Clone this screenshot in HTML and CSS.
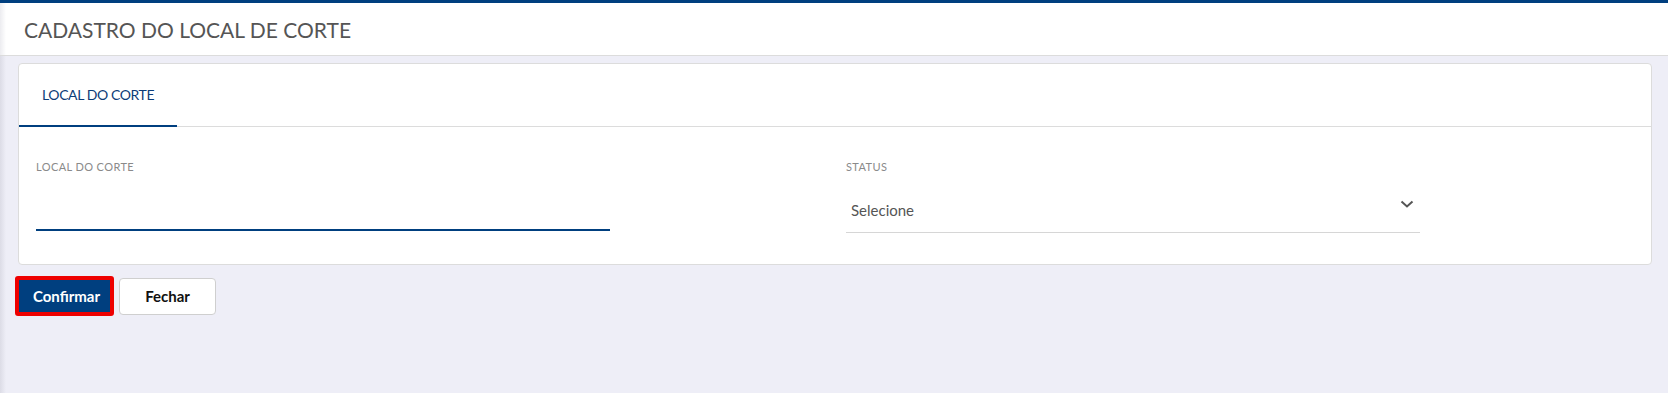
FILE: index.html
```html
<!DOCTYPE html>
<html lang="pt-BR">
<head>
<meta charset="utf-8">
<title>Cadastro do Local de Corte</title>
<link rel="stylesheet" href="styles.css">
</head>
<body>
<header class="page-header">
  <h1 class="page-title">CADASTRO DO LOCAL DE CORTE</h1>
</header>
<main class="page-main">
  <section class="card">
    <nav class="tab-bar">
      <div class="tab tab-active">LOCAL DO CORTE</div>
    </nav>
    <div class="card-body">
      <div class="field">
        <label class="field-label">LOCAL DO CORTE</label>
        <div class="text-input"></div>
      </div>
      <div class="field">
        <label class="field-label">STATUS</label>
        <div class="select">
          <span class="select-text">Selecione</span>
          <svg class="chevron" width="14" height="8" viewBox="0 0 14 8"><polyline points="1.5,1.5 7,6.5 12.5,1.5" fill="none" stroke="#555" stroke-width="2"/></svg>
        </div>
      </div>
    </div>
  </section>
  <div class="actions">
    <button class="btn btn-primary">Confirmar</button>
    <button class="btn btn-default">Fechar</button>
  </div>
</main>
</body>
</html>
```
FILE: styles.css
```css
html, body {
  margin: 0;
  padding: 0;
  height: 100%;
}
body {
  font-family: Lato, "Open Sans", sans-serif;
  background: linear-gradient(to right, #dcdce6 0, #eeeef7 6px);
  color: #555;
}
.page-header {
  border-top: 3px solid #003f7f;
  border-bottom: 1px solid #dcdcdc;
  height: 52px;
  display: flex;
  align-items: center;
  background: linear-gradient(to right, #ececf0 0, #ffffff 6px);
  padding-left: 24px;
}
.page-title {
  margin: 0;
  font-size: 21px;
  font-weight: 400;
  color: #555;
}
.page-main {
  padding: 7px 16px 0 18px;
}
.card {
  background: #fff;
  border: 1px solid #dcdcdc;
  border-radius: 4px;
}
.tab-bar {
  display: flex;
  height: 62px;
  border-bottom: 1px solid #dcdcdc;
}
.tab {
  height: 61px;
  padding: 0 23px;
  display: flex;
  align-items: center;
  font-size: 14px;
  letter-spacing: -0.4px;
  color: #0c3c78;
  border-bottom: 2px solid transparent;
  margin-bottom: -1px;
}
.tab-active {
  border-bottom-color: #003f7f;
}
.card-body {
  display: grid;
  grid-template-columns: 574px 574px;
  column-gap: 236px;
  padding: 34px 17px 31px 17px;
}
.field {
  display: flex;
  flex-direction: column;
}
.field-label {
  font-size: 11px;
  line-height: 12px;
  letter-spacing: 0.4px;
  color: #8a8a8a;
}
.text-input {
  margin-top: 16px;
  height: 40px;
  border-bottom: 2px solid #003f7f;
}
.select {
  margin-top: 16px;
  height: 43px;
  border-bottom: 1px solid #d6d6d6;
  display: flex;
  justify-content: space-between;
  align-items: center;
  padding: 0 6px 0 5px;
}
.select-text {
  font-size: 15px;
  color: #555;
  position: relative;
  top: -1px;
}
.chevron {
  align-self: flex-start;
  margin-top: 11px;
}
.actions {
  display: flex;
  align-items: center;
  gap: 5px;
  margin-top: 11px;
  margin-left: -3px;
}
.btn {
  font-family: Lato, "Open Sans", sans-serif;
  font-size: 15px;
  cursor: pointer;
  border-radius: 4px;
}
.btn-primary {
  width: 99px;
  height: 40px;
  padding: 0 0 0 4px;
  background: #003f7f;
  color: #fff;
  font-weight: 700;
  border: 4px solid #ee0000;
  border-radius: 3px;
}
.btn-default {
  width: 97px;
  height: 37px;
  background: #fff;
  color: #111;
  font-weight: 700;
  border: 1px solid #cfcfcf;
}
```
